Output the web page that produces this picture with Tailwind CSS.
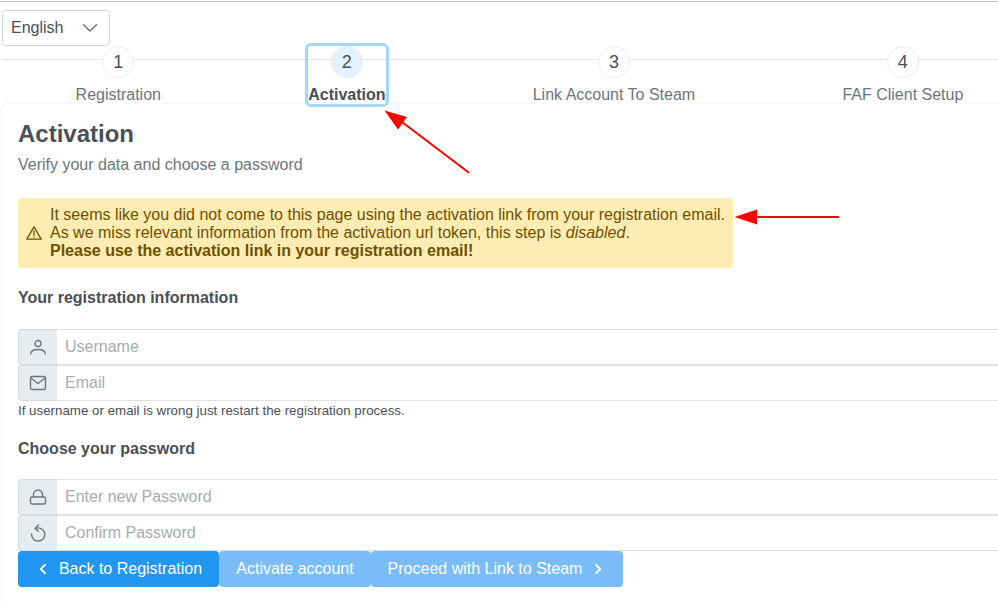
<!doctype html>
<html lang="en">
<head>
<meta charset="utf-8">
<title>Activation</title>
<script src="https://cdn.jsdelivr.net/npm/@tailwindcss/browser@4"></script>
</head>
<body class="relative h-[603px] w-[998px] overflow-hidden bg-white font-['Liberation_Sans',Arial,sans-serif] text-base text-[#495057]">
<div class="mt-px h-px w-full bg-[#bdbdbd]"></div>
<div class="w-[1040px] pl-[2px]">
  <div class="mt-2 flex h-9 w-[108px] items-center justify-between rounded border border-[#ced4da] bg-white pl-2 pr-[11px] text-[#495057]">
    <span>English</span>
    <svg class="h-4 w-4" viewBox="0 0 16 16" fill="none" stroke="#6c757d" stroke-width="1.5" stroke-linecap="round" stroke-linejoin="round"><path d="M1.5 4.8 8 11l6.5-6.2"/></svg>
  </div>
  <div class="relative z-10 flex h-[58px] w-[1035px] justify-around">
    <div class="absolute left-0 right-0 top-[13px] h-px bg-[#dee2e6]"></div>
    <div class="relative flex flex-col items-center"><span class="flex h-8 w-8 items-center justify-center rounded-full border border-[#e9ecef] bg-white text-[18px] text-[#495057]">1</span><span class="mt-[7px] bg-white leading-[19px] text-[#6c757d]">Registration</span></div>
    <div class="relative flex flex-col items-center rounded-[3px] outline-3 outline-[#a6d5fa]"><span class="flex h-8 w-8 items-center justify-center rounded-full border border-[#e9ecef] bg-[#e3f2fd] text-[18px] text-[#495057]">2</span><span class="mt-[7px] bg-white font-bold leading-[19px] text-[#495057]">Activation</span></div>
    <div class="relative flex flex-col items-center"><span class="flex h-8 w-8 items-center justify-center rounded-full border border-[#e9ecef] bg-white text-[18px] text-[#495057]">3</span><span class="mt-[7px] bg-white leading-[19px] text-[#6c757d]">Link Account To Steam</span></div>
    <div class="relative flex flex-col items-center"><span class="flex h-8 w-8 items-center justify-center rounded-full border border-[#e9ecef] bg-white text-[18px] text-[#495057]">4</span><span class="mt-[7px] bg-white leading-[19px] text-[#6c757d]">FAF Client Setup</span></div>
  </div>
  <main class="h-[520px] rounded-[6px] bg-white px-4 pt-[15px] shadow-[0_0_3px_rgba(0,0,0,0.10)]">
    <h1 class="text-[24px] font-bold leading-[29px] text-[#495057]">Activation</h1>
    <p class="mt-[7px] leading-[19px] text-[#6c757d]">Verify your data and choose a password</p>
    <div class="mt-[24px] flex h-[70px] w-[715px] items-center gap-2 rounded bg-[#ffecb3] px-2 text-[#6d5100]">
      <svg class="h-4 w-4 shrink-0" viewBox="0 0 16 16" fill="none" stroke="#6d5100" stroke-width="1.3" stroke-linejoin="round" stroke-linecap="round"><path d="M8 1.9 15.2 14.2H.8Z"/><path d="M8 6v4.3M8 11.9v.3"/></svg>
      <p class="leading-[18px]">It seems like you did not come to this page using the activation link from your registration email.<br>As we miss relevant information from the activation url token, this step is <em>disabled</em>.<br><strong>Please use the activation link in your registration email!</strong></p>
    </div>
    <h2 class="mt-[20px] font-bold leading-[19px] text-[#495057]">Your registration information</h2>
    <div class="mt-[22px] flex h-9">
      <span class="flex w-[39px] items-center justify-center rounded-l border border-r-0 border-[#ced4da]/70 bg-[#e9ecef]"><svg class="h-[18px] w-[18px]" viewBox="0 0 18 18" fill="none" stroke="#6c757d" stroke-width="1.3" stroke-linecap="round"><circle cx="9" cy="5.5" r="3"/><path d="M1.6 16c.2-3 3-4.5 7.4-4.5s7.2 1.5 7.4 4.5"/></svg></span>
      <input class="min-w-0 flex-1 border border-l-0 border-[#dee2e6] px-2 outline-none placeholder:text-[#a6acb3]" placeholder="Username">
    </div>
    <div class="flex h-9">
      <span class="flex w-[39px] items-center justify-center rounded-l border border-r-0 border-[#ced4da]/70 bg-[#e9ecef]"><svg class="h-[18px] w-[18px]" viewBox="0 0 18 18" fill="none" stroke="#6c757d" stroke-width="1.4" stroke-linejoin="round"><rect x="1.5" y="2.5" width="15" height="13" rx="1.5"/><path d="M1.8 4 9 9.5 16.2 4"/></svg></span>
      <input class="min-w-0 flex-1 border border-l-0 border-[#dee2e6] px-2 outline-none placeholder:text-[#a6acb3]" placeholder="Email">
    </div>
    <p class="pt-px text-[13.34px] leading-[17px] text-[#495057]">If username or email is wrong just restart the registration process.</p>
    <h2 class="mt-[20px] font-bold leading-[19px] text-[#495057]">Choose your password</h2>
    <div class="mt-[21px] flex h-9">
      <span class="flex w-[39px] items-center justify-center rounded-l border border-r-0 border-[#ced4da]/70 bg-[#e9ecef]"><svg class="h-[18px] w-[18px]" viewBox="0 0 18 18" fill="none" stroke="#6c757d" stroke-width="1.4" stroke-linejoin="round"><rect x="1.5" y="9" width="15" height="7" rx="1.5"/><path d="M4.5 9V6.5a4.5 4.5 0 0 1 9 0V9"/></svg></span>
      <input class="min-w-0 flex-1 border border-l-0 border-[#dee2e6] px-2 outline-none placeholder:text-[#a6acb3]" placeholder="Enter new Password">
    </div>
    <div class="flex h-9">
      <span class="flex w-[39px] items-center justify-center rounded-l border border-r-0 border-[#ced4da]/70 bg-[#e9ecef]"><svg class="h-[18px] w-[18px]" viewBox="0 0 18 18" fill="none" stroke="#6c757d" stroke-width="1.4" stroke-linecap="round" stroke-linejoin="round"><path d="M6.6 4.4A6.6 6.6 0 1 1 2.6 10"/><path d="M9.4 1 6.2 4.4l3.2 2.8"/></svg></span>
      <input class="min-w-0 flex-1 border border-l-0 border-[#dee2e6] px-2 outline-none placeholder:text-[#a6acb3]" placeholder="Confirm Password">
    </div>
    <div class="flex h-9 text-white">
      <button class="flex w-[201px] items-center justify-center gap-2 rounded bg-[#2196f3]"><svg class="h-4 w-4" viewBox="0 0 16 16" fill="none" stroke="#fff" stroke-width="1.8" stroke-linecap="round" stroke-linejoin="round"><path d="M10 3.8 5.8 8l4.2 4.2"/></svg><span>Back to Registration</span></button>
      <button class="w-[152px] rounded bg-[#7abcf7]">Activate account</button>
      <button class="flex w-[252px] items-center justify-center gap-2 rounded bg-[#7abcf7]"><span>Proceed with Link to Steam</span><svg class="h-4 w-4" viewBox="0 0 16 16" fill="none" stroke="#fff" stroke-width="1.8" stroke-linecap="round" stroke-linejoin="round"><path d="M6 3.8 10.2 8 6 12.2"/></svg></button>
    </div>
  </main>
</div>
<svg class="pointer-events-none absolute left-0 top-0 z-20" width="998" height="603" fill="#ff0000" stroke="none">
  <path d="M469 172.7 400 120.5" stroke="#ff0000" stroke-width="2" fill="none"/>
  <path d="M384.5 110.5 407 117 398 129.5Z"/>
  <path d="M755 217H839" stroke="#ff0000" stroke-width="2" fill="none"/>
  <path d="M734.5 217 757 209.5V224.5Z"/>
</svg>
</body>
</html>
